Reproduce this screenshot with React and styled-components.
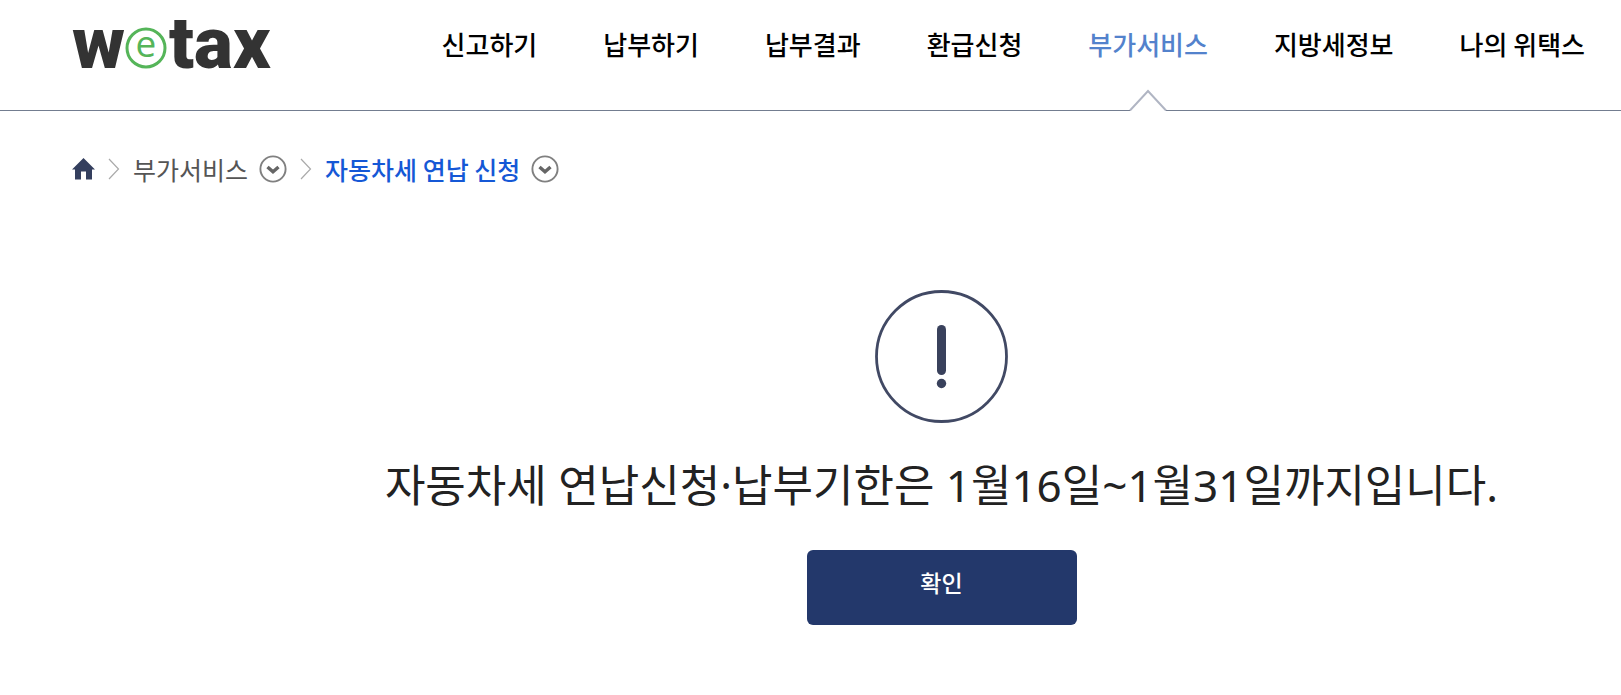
import React from 'react';
import styled, { createGlobalStyle } from 'styled-components';

const GlobalStyle = createGlobalStyle`
  * {
    box-sizing: border-box;
  }
  body {
    margin: 0;
    background: #fff;
    color: #222;
    font-family: 'Noto Sans CJK KR', 'Noto Sans', sans-serif;
  }
`;

const Header = styled.header`
  display: flex;
  justify-content: space-between;
  height: 111px;
  padding: 0 36px 0 72px;
  border-bottom: 1px solid #737d90;
`;

const LogoLink = styled.a`
  flex: none;

  svg {
    display: block;
  }
`;

const Menu = styled.nav`
  display: flex;
  gap: 66px;
`;

const MenuLink = styled.a`
  position: relative;
  padding-top: 24px;
  color: ${(props) => (props.$active ? '#5382cc' : '#000')};
  font-size: 26px;
  font-weight: 500;
  line-height: 40px;
  text-decoration: none;
  white-space: nowrap;
`;

const Notch = styled.svg`
  position: absolute;
  bottom: -1px;
  left: 50%;
  transform: translateX(-50%);
`;

const Breadcrumb = styled.nav`
  display: flex;
  align-items: center;
  gap: 13px;
  padding: 39px 72px 0;
  font-size: 25px;
  line-height: 38px;

  svg {
    display: block;
    flex: none;
  }
`;

const Crumb = styled.a`
  color: ${(props) => (props.$current ? '#1558d6' : '#555')};
  font-weight: ${(props) => (props.$current ? 500 : 400)};
  text-decoration: none;
`;

const ToggleButton = styled.button`
  padding: 0;
  border: 0;
  background: none;
  cursor: pointer;
`;

const CrumbGroup = styled.div`
  display: flex;
  align-items: center;
  gap: 11px;
`;

const Notice = styled.main`
  display: flex;
  flex-direction: column;
  align-items: center;
  padding: 102px 0 64px 262px;
`;

const Message = styled.h1`
  margin: 28px 0 0;
  font-family: 'Noto Sans', 'Noto Sans CJK KR', sans-serif;
  font-size: 44px;
  font-weight: 400;
  line-height: 68px;
  white-space: nowrap;
`;

const ConfirmButton = styled.button`
  width: 270px;
  height: 75px;
  margin-top: 31px;
  padding: 0 0 12px;
  border: 0;
  border-radius: 6px;
  background: #23386b;
  color: #fff;
  font-family: inherit;
  font-size: 23px;
  font-weight: 500;
  cursor: pointer;
`;

const menus = ['신고하기', '납부하기', '납부결과', '환급신청', '부가서비스', '지방세정보', '나의 위택스'];

const Logo = () => (
  <svg width="204" height="92" viewBox="0 0 204 92" role="img" aria-label="wetax">
    <g fill="#333" fontFamily="Roboto, sans-serif" fontWeight="900" fontSize="73">
      <text x="0" y="68">w</text>
      <text x="97" y="68">tax</text>
    </g>
    <circle cx="74" cy="48" r="19" fill="#fff" stroke="#55b559" strokeWidth="3" />
    <text x="74" y="57" textAnchor="middle" fill="#55b559" fontFamily="'Open Sans', sans-serif" fontWeight="500" fontSize="37">e</text>
  </svg>
);

const HomeIcon = () => (
  <svg width="23" height="22" viewBox="0 0 23 22" role="img" aria-label="홈">
    <path d="M11.5 0 L23 11.5 H20 V21.5 H14 V13.5 H9 V21.5 H3 V11.5 H0 Z" fill="#343f5e" />
  </svg>
);

const Separator = () => (
  <svg width="12" height="22" viewBox="0 0 12 22" aria-hidden="true">
    <path d="M1 1 L10.5 11 L1 21" fill="none" stroke="#aaa" strokeWidth="1.2" />
  </svg>
);

const Toggle = ({ label }) => (
  <ToggleButton type="button" aria-label={label}>
    <svg width="28" height="28" viewBox="0 0 28 28">
      <circle cx="14" cy="14" r="12.6" fill="none" stroke="#808080" strokeWidth="1.9" />
      <path d="M8.5 12 L14 16.8 L19.5 12" fill="none" stroke="#666" strokeWidth="3.4" />
    </svg>
  </ToggleButton>
);

const AlertIcon = () => (
  <svg width="133" height="133" viewBox="0 0 133 133" aria-hidden="true">
    <circle cx="66.5" cy="66.5" r="65" fill="none" stroke="#414964" strokeWidth="2.8" />
    <rect x="62" y="35" width="9" height="50" rx="4.5" fill="#39415c" />
    <circle cx="66.5" cy="93.5" r="4.7" fill="#39415c" />
  </svg>
);

function App() {
  return (
    <>
      <GlobalStyle />
      <Header>
        <LogoLink href="#">
          <Logo />
        </LogoLink>
        <Menu>
          {menus.map((menu) => {
            const active = menu === '부가서비스';
            return (
              <MenuLink href="#" key={menu} $active={active}>
                {menu}
                {active && (
                  <Notch width="40" height="22" viewBox="0 0 40 22" aria-hidden="true">
                    <path d="M2 22 L20 2 L38 22 Z" fill="#fff" />
                    <path d="M2 21.5 L20 2 L38 21.5" fill="none" stroke="#b0b5c3" strokeWidth="2" />
                  </Notch>
                )}
              </MenuLink>
            );
          })}
        </Menu>
      </Header>

      <Breadcrumb aria-label="현재 위치">
        <HomeIcon />
        <Separator />
        <CrumbGroup>
          <Crumb href="#">부가서비스</Crumb>
          <Toggle label="부가서비스 메뉴 열기" />
        </CrumbGroup>
        <Separator />
        <CrumbGroup>
          <Crumb href="#" $current>자동차세 연납 신청</Crumb>
          <Toggle label="자동차세 연납 신청 메뉴 열기" />
        </CrumbGroup>
      </Breadcrumb>

      <Notice>
        <AlertIcon />
        <Message>자동차세 연납신청·납부기한은 1월16일~1월31일까지입니다.</Message>
        <ConfirmButton type="button">확인</ConfirmButton>
      </Notice>
    </>
  );
}

export default App;
